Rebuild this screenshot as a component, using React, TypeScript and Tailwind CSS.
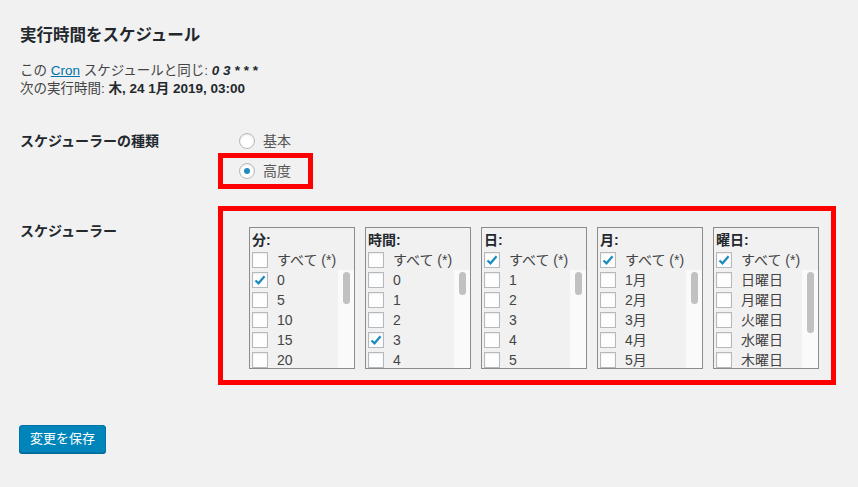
import React from "react";

const FONT = '"Liberation Sans", "Noto Sans CJK JP", sans-serif';

function Checkbox({ checked }: { checked?: boolean }) {
  return (
    <span className="w-4 h-4 shrink-0 border border-[#b4b9be] bg-[#fefefe] shadow-[inset_0_1px_2px_rgba(0,0,0,0.07)] flex items-center justify-center">
      {checked && (
        <svg width="14" height="14" viewBox="0 0 16 16" fill="none">
          <path d="M2.8 8.6 L6.3 11.8 L13.2 3.8" stroke="#1e8cbe" strokeWidth="2.6" strokeLinecap="butt" strokeLinejoin="miter" />
        </svg>
      )}
    </span>
  );
}

function Row({ label, checked }: { label: string; checked?: boolean }) {
  return (
    <div className="h-5 flex items-center gap-[9px] whitespace-nowrap text-[14px] text-[#444]">
      <Checkbox checked={checked} />
      <span>{label}</span>
    </div>
  );
}

type Col = {
  title: string;
  allChecked: boolean;
  items: string[];
  checked: string | null;
  thumb: number;
};

const minutes = Array.from({ length: 12 }, (_, i) => String(i * 5));
const hours = Array.from({ length: 24 }, (_, i) => String(i));
const days = Array.from({ length: 31 }, (_, i) => String(i + 1));
const months = Array.from({ length: 12 }, (_, i) => `${i + 1}月`);
const weekdays = ["日曜日", "月曜日", "火曜日", "水曜日", "木曜日", "金曜日", "土曜日"];

const cols: Col[] = [
  { title: "分:", allChecked: false, items: minutes, checked: "0", thumb: 32 },
  { title: "時間:", allChecked: false, items: hours, checked: "3", thumb: 23 },
  { title: "日:", allChecked: true, items: days, checked: null, thumb: 23 },
  { title: "月:", allChecked: true, items: months, checked: null, thumb: 32 },
  { title: "曜日:", allChecked: true, items: weekdays, checked: null, thumb: 61 },
];

function Box({ col }: { col: Col }) {
  return (
    <div className="w-[106px] h-[142px] border border-[#8c8c8c] pt-[2px] pl-[2px] flex flex-col">
      <div className="h-5 leading-5 text-[14px] font-bold text-[#23282d]">{col.title}</div>
      <Row label="すべて (*)" checked={col.allChecked} />
      <div className="flex flex-1 min-h-0">
        <div className="flex-1 overflow-hidden">
          {col.items.slice(0, 5).map((it) => (
            <Row key={it} label={it} checked={col.checked === it} />
          ))}
        </div>
        <div className="w-4 bg-[#fafafa] flex justify-center pt-[2px]">
          <div className="w-[7px] rounded-full bg-[#c1c1c1]" style={{ height: col.thumb }} />
        </div>
      </div>
    </div>
  );
}

function Radio({ checked, label }: { checked?: boolean; label: string }) {
  return (
    <div className="flex items-center gap-2 text-[14px] text-[#555]">
      <span className="w-4 h-4 rounded-full border border-[#b4b9be] bg-white shadow-[inset_0_1px_2px_rgba(0,0,0,0.1)] flex items-center justify-center">
        {checked && <span className="w-[6px] h-[6px] rounded-full bg-[#1e8cbe]" />}
      </span>
      <span>{label}</span>
    </div>
  );
}

export default function App() {
  return (
    <div className="w-full min-h-screen h-[487px] bg-[#f1f1f1] px-[20px] pt-[23px]" style={{ fontFamily: FONT }}>
      <h2 className="text-[16.5px] leading-[24px] font-semibold text-[#23282d]">実行時間をスケジュール</h2>
      <div className="mt-[15px] text-[13.5px] leading-[18px] text-[#444]">
        <div>
          この <a className="text-[#0073aa] underline">Cron</a> スケジュールと同じ: <b className="italic text-[#23282d]">0 3 * * *</b>
        </div>
        <div>
          次の実行時間: <b className="text-[#23282d]">木, 24 1月 2019, 03:00</b>
        </div>
      </div>

      <div className="flex mt-[31px]">
        <div className="w-[198px] mt-[3px] text-[14px] leading-[18px] font-bold text-[#23282d]">スケジューラーの種類</div>
        <div className="flex flex-col">
          <div className="h-[24px] flex items-center pl-[21px]">
            <Radio label="基本" />
          </div>
          <div className="w-[95px] h-[36px] border-[5px] border-[#ff0000] flex items-center pl-[16px]">
            <Radio checked label="高度" />
          </div>
        </div>
      </div>

      <div className="flex mt-[17px]">
        <div className="w-[198px] mt-[16px] text-[14px] leading-[18px] font-bold text-[#23282d]">スケジューラー</div>
        <div className="w-[618px] border-[5px] border-[#ff0000] pl-[26px] pt-[16px] pb-[11px] pr-[12px] flex gap-[10px]">
          {cols.map((c) => (
            <Box key={c.title} col={c} />
          ))}
        </div>
      </div>

      <button className="mt-[40px] -ml-px h-[28px] px-[10px] rounded-[3px] bg-[#0085ba] border border-[#0073aa] shadow-[0_1px_0_#006799] text-white text-[13px] leading-[26px]">
        変更を保存
      </button>
    </div>
  );
}
